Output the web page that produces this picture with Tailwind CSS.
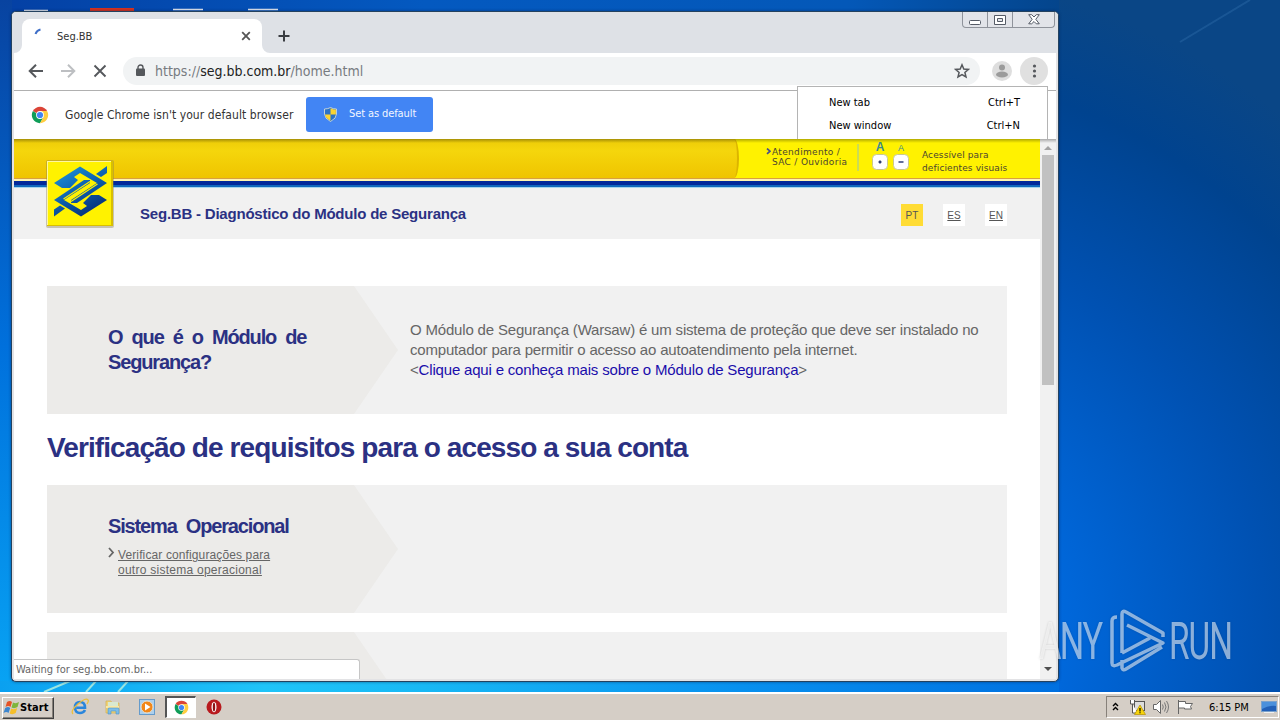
<!DOCTYPE html>
<html lang="pt-BR">

<head>
    <meta charset="UTF-8">
    <meta name="viewport" content="width=device-width, initial-scale=1.0">
    <title>Seg.BB</title>
    <script src="https://cdn.jsdelivr.net/npm/@tailwindcss/browser@4"></script>
</head>

<body class="w-[1280px] h-[720px] overflow-hidden relative flex flex-col justify-end bg-[#0053b8] font-['DejaVu_Sans_Condensed','DejaVu_Sans',sans-serif] text-[11px] text-black">

    <!-- Wallpaper -->
    <svg class="absolute inset-0" width="1280" height="692" viewBox="0 0 1280 692">
        <defs>
            <radialGradient id="sky" gradientUnits="userSpaceOnUse" cx="870" cy="630" r="660">
                <stop offset="0" stop-color="#0078ee" />
                <stop offset=".3" stop-color="#0067da" />
                <stop offset=".6" stop-color="#0051b2" />
                <stop offset=".85" stop-color="#00438f" />
                <stop offset="1" stop-color="#0a4686" />
            </radialGradient>
            <linearGradient id="left" x1="0" y1="0" x2="0" y2="1">
                <stop offset="0" stop-color="#0843a0" />
                <stop offset=".5" stop-color="#0070dc" />
                <stop offset="1" stop-color="#08a4f4" />
            </linearGradient>
            <linearGradient id="top" x1="0" y1="0" x2="1" y2="0">
                <stop offset="0" stop-color="#0440a4" />
                <stop offset=".4" stop-color="#0459c0" />
                <stop offset=".8" stop-color="#0458b8" />
                <stop offset="1" stop-color="#04458c" />
            </linearGradient>
            <linearGradient id="bottom" x1="0" y1="0" x2="1" y2="0">
                <stop offset="0" stop-color="#0aa0f0" />
                <stop offset=".25" stop-color="#20c4f8" />
                <stop offset=".4" stop-color="#18b8f4" />
                <stop offset=".7" stop-color="#0890ee" />
                <stop offset="1" stop-color="#0070e0" />
            </linearGradient>
        </defs>
        <rect width="1280" height="692" fill="url(#sky)" />
        <rect width="1059" height="12" fill="url(#top)" />
        <rect width="12" height="692" fill="url(#left)" />
        <rect y="681" width="1059" height="11" fill="url(#bottom)" />
        <path d="M44 692L70 681M86 692l10-11M118 692l10-11" stroke="#9ce4e0" stroke-width="2" />
        <path d="M1180 42L1250 0" stroke="#3f7fba" stroke-opacity=".3" stroke-width="2" />
        <path d="M24 10.500h24M173 9.500h30M248 9.500h30" stroke="#dfe6ef" stroke-width="1.500" />
        <path d="M90 9.500h44" stroke="#d8321f" stroke-width="3" />
    </svg>

    <!-- Browser window -->
    <main class="absolute left-[11px] top-[11px] w-[1048px] h-[671px] rounded-[5px] border border-[#24425f] bg-[#e3e3e5] px-0.5 pb-[2px] flex flex-col shadow-[0_0_3px_rgba(0,20,60,.5)]">

        <!-- Tab strip -->
        <div class="h-[41px] shrink-0 -mx-0.5 px-0.5 bg-[#dee1e6] rounded-t-[4px] flex items-end relative">
            <div class="ml-2 w-60 h-[34px] rounded-t-lg bg-white flex items-center relative">
                <svg class="absolute -left-2 bottom-0" width="8" height="8"><path d="M0 8A8 8 0 0 0 8 0V8z" fill="#fff" /></svg>
                <svg class="absolute -right-2 bottom-0" width="8" height="8"><path d="M8 8A8 8 0 0 1 0 0V8z" fill="#fff" /></svg>
                <svg class="ml-2 mb-1" width="16" height="16" viewBox="0 0 16 16"><path d="M5.500 8A7 7 0 0 1 10.500 3.500" fill="none" stroke="#3f6fc8" stroke-width="2" /></svg>
                <span class="ml-[11px] pt-0.5 text-[#333]">Seg.BB</span>
                <svg class="absolute left-[219px] top-[12px]" width="10" height="10" viewBox="0 0 10 10"><path d="M1.200 1.200l7.600 7.600M8.800 1.200L1.200 8.800" stroke="#555" stroke-width="1.800" /></svg>
            </div>
            <svg class="ml-4 mb-[11px]" width="12" height="12" viewBox="0 0 12 12"><path d="M6 .5v11M.5 6h11" stroke="#3a3d42" stroke-width="2" /></svg>
            <div class="absolute right-[3px] top-0 h-4 w-[93px] flex border border-t-0 border-[#8f939b] rounded-b-[4px] bg-[#e2e4e9]">
                <div class="w-[25px] border-r border-[#8f939b] flex justify-center items-center"><svg width="12" height="12" viewBox="0 0 12 12"><rect x=".5" y="6.500" width="11" height="4" rx="1" fill="#fff" stroke="#555b66" /></svg></div>
                <div class="w-[25px] border-r border-[#8f939b] flex justify-center items-center"><svg width="12" height="12" viewBox="0 0 12 12"><path fill-rule="evenodd" d="M.5 1.500h11v9H.5zM3.500 4.500v3h5v-3z" fill="#fff" stroke="#555b66" /></svg></div>
                <div class="flex-1 flex justify-center items-center"><svg width="12" height="11" viewBox="0 0 12 11"><path d="M.7.700h3L6 3 8.300.700h3L7.800 5.300l3.500 4.500h-3L6 7.500 3.700 9.800h-3L4.200 5.300z" fill="#fff" stroke="#555b66" /></svg></div>
            </div>
        </div>

        <!-- Toolbar -->
        <div class="h-[38px] shrink-0 bg-white border-b border-[#b0b0b0] flex items-center pl-[14px] pr-[8px] pb-px">
            <svg width="16" height="16" viewBox="0 0 16 16"><path d="M15 8H2M8 1.700L1.700 8 8 14.300" fill="none" stroke="#55585c" stroke-width="2" /></svg>
            <svg class="ml-4" width="16" height="16" viewBox="0 0 16 16"><path d="M1 8h13M8 1.700L14.300 8 8 14.300" fill="none" stroke="#bdbfc2" stroke-width="2" /></svg>
            <svg class="ml-4" width="16" height="16" viewBox="0 0 16 16"><path d="M2.500 2.500l11 11M13.500 2.500l-11 11" stroke="#55585c" stroke-width="1.900" /></svg>
            <div class="ml-[15px] w-[857px] h-7 rounded-full bg-[#f1f3f4] flex items-center relative">
                <svg class="ml-3" width="11" height="14" viewBox="0 0 11 14"><rect x="1" y="4.500" width="9" height="7.500" rx="1" fill="#55585c" /><path d="M3 5V3.500a2.500 2.500 0 0 1 5 0V5" fill="none" stroke="#55585c" stroke-width="1.400" /></svg>
                <span class="ml-[9px] text-[14px] text-[#777b80]">https://<span class="text-[#222]">seg.bb.com.br</span>/home.html</span>
                <svg class="absolute right-[10px]" width="16" height="16" viewBox="0 0 16 16"><path d="M8 1.800l1.800 4.200 4.600.4-3.500 3 1.100 4.500L8 11.500l-4 2.400 1.100-4.500-3.500-3 4.600-.4z" fill="none" stroke="#55585c" stroke-width="1.500" /></svg>
            </div>
            <svg class="ml-3" width="20" height="20" viewBox="0 0 20 20"><circle cx="10" cy="10" r="10" fill="#dedede" /><circle cx="10" cy="6.500" r="3" fill="#9b9b9b" /><ellipse cx="10" cy="13.500" rx="6" ry="3" fill="#9b9b9b" /></svg>
            <svg class="ml-2" width="28" height="28" viewBox="0 0 28 28"><circle cx="14" cy="14" r="14" fill="#e0e0e0" /><g fill="#55585c"><circle cx="14.500" cy="9" r="1.600" /><circle cx="14.500" cy="14" r="1.600" /><circle cx="14.500" cy="19" r="1.600" /></g></svg>
        </div>

        <!-- Default browser bar -->
        <div class="h-12 shrink-0 bg-white flex items-center pl-[17px] relative z-10">
            <svg width="18" height="18" viewBox="0 0 18 18">
                <path d="M9 9L1.900 4.900A8.200 8.200 0 0 1 16.100 4.900z" fill="#db4437" />
                <path d="M9 9h-1L1.900 4.900A8.200 8.200 0 0 0 9 17.200L12.500 11z" fill="#0f9d58" />
                <path d="M9 17.200A8.200 8.200 0 0 0 16.100 4.900H9L12.500 11z" fill="#ffcd40" />
                <circle cx="9" cy="9" r="3.900" fill="#fff" /><circle cx="9" cy="9" r="3.100" fill="#4285f4" />
            </svg>
            <span class="ml-4 w-[229px] text-[12px] text-[#333] whitespace-nowrap tracking-[.07px]">Google Chrome isn't your default browser</span>
            <div class="ml-3 -mt-px w-[127px] h-[35px] rounded-[3px] bg-[#4285f4] flex items-center pl-[18px] text-[#f2f6ff] whitespace-nowrap tracking-[-.1px]">
                <svg class="mr-3" width="13" height="15" viewBox="0 0 13 15"><path d="M6.500.5Q9 2 12.500 2v5q0 4.500-6 7.500Q.5 11.500.5 7V2Q4 2 6.500.500z" fill="#2a72c8" stroke="#e3e6d5" stroke-width=".8" /><path d="M6.500 1.200Q9 2.600 11.900 2.600V7.500H6.500zM6.500 7.500v6.300Q1.100 11 1.100 7.500z" fill="#fbd431" /></svg>
                Set as default
            </div>
        </div>

        <!-- Page -->
        <div class="flex-1 min-h-0 flex relative overflow-hidden">
            <div class="w-[1026px] bg-white overflow-hidden font-['Liberation_Sans',Arial,sans-serif]">
                <header class="relative">
                    <div class="h-10 bg-[#fff200] flex border-b border-[#d8a040]">
                        <!-- Gold strip with its rounded right end -->
                        <div class="w-[725px] h-full rounded-r-[5px_20px] border-r-2 border-[#dcb400] bg-linear-to-b from-[#eccb08] via-[#f5d60c] via-30% to-[#efc400]"></div>
                        <div class="flex-1 flex font-['DejaVu_Sans',sans-serif] text-[9px] text-[#4b4431]">
                            <svg class="ml-[27px] mt-[9px]" width="5" height="7" viewBox="0 0 5 7"><path d="M1 .5l3 2.700-3 2.700" fill="none" stroke="#4a5088" stroke-width="1.700" /></svg>
                            <div class="ml-px w-[85px] pt-[8px] leading-[10px] tracking-[.33px] whitespace-nowrap">Atendimento /<br>SAC / Ouvidoria</div>
                            <div class="w-0.5 h-[27px] mt-[5px] bg-[#cbdc55]"></div>
                            <div class="ml-[13px] flex gap-[5px] items-end h-[31px] font-['Liberation_Sans',sans-serif] text-[#3c8a90]">
                                <div class="w-4 flex flex-col items-center"><span class="text-[12px] leading-[12px] font-bold">A</span><svg width="16" height="17" viewBox="0 0 16 17"><rect x=".5" y="1.500" width="15" height="15" rx="4" fill="#fff" stroke="#c9c890" /><path d="M8 7.500v3M6.500 9h3" stroke="#26366c" stroke-width="1.600" /></svg></div>
                                <div class="w-4 flex flex-col items-center"><span class="text-[9px] leading-[9px]">A</span><svg width="16" height="17" viewBox="0 0 16 17"><rect x=".5" y="1.500" width="15" height="15" rx="4" fill="#fff" stroke="#c9c890" /><path d="M5.500 9h5" stroke="#3a4a80" stroke-width="1.600" /></svg></div>
                            </div>
                            <div class="ml-[13px] pt-[10px] leading-[13px] tracking-[.12px] whitespace-nowrap">Acessível para<br>deficientes visuais</div>
                        </div>
                    </div>
                    <div class="h-0.5 bg-[#fff3b0]"></div>
                    <div class="h-1 bg-[#03299a]"></div>
                    <div class="h-0.5 bg-[#1168bd]"></div>
                    <div class="h-px bg-[#a8d4ec]"></div>
                    <div class="h-[51px] bg-[#f1f1f1] flex items-center pl-[126px] pr-[33px] text-[10px] text-[#555]">
                        <h1 class="text-[15px] pt-0.5 font-bold text-[#2b3183] tracking-[-.21px] flex-1">Seg.BB - Diagnóstico do Módulo de Segurança</h1>
                        <span class="w-[22px] h-[22px] bg-[#ffdc35] flex items-center justify-center mt-[3px]">PT</span>
                        <a href="#" class="ml-5 w-[22px] h-[22px] bg-white flex items-center justify-center underline mt-[3px]">ES</a>
                        <a href="#" class="ml-5 w-[22px] h-[22px] bg-white flex items-center justify-center underline mt-[3px]">EN</a>
                    </div>
                    <!-- Logo -->
                    <svg class="absolute left-[31px] top-[20px]" width="70" height="70" viewBox="0 0 70 70">
                        <defs>
                            <linearGradient id="bb" gradientUnits="userSpaceOnUse" x1="20" y1="8" x2="50" y2="58"><stop offset="0" stop-color="#1b8fd6" /><stop offset=".5" stop-color="#0c5cab" /><stop offset="1" stop-color="#062a72" /></linearGradient>
                        </defs>
                        <rect x="1" y="1" width="68" height="68" rx="2" fill="#8a8050" opacity=".4" />
                        <rect x="2" y="2" width="66" height="65" fill="#d9bf00" />
                        <rect x="2" y="2" width="64" height="64" fill="#fff7a0" />
                        <rect x="3" y="3" width="63" height="63" fill="#fff200" />
                        <g fill="url(#bb)">
                            <path d="M9 24L35 7.500 62 24 32 44H26V41L52 24 35 14 29 18 33 21 25 29H17z" />
                            <path d="M62 41L36 57.500 9 41 39 21H45V24L19 41 36 51 42 47 38 44 46 36H54z" />
                            <path d="M62 7v7l-6 4-5-3zM9 57.500v-7l6-4 5 3z" />
                        </g>
                        <path d="M26 42.500L52.500 25M45 22.500L18.500 40" stroke="#fff200" stroke-width="1.200" />
                    </svg>
                </header>

                <section class="mt-[47px] ml-[33px] w-[960px] h-32 bg-[#f1f1f1] flex relative">
                    <svg class="absolute left-0 top-0" width="351" height="128"><path d="M0 0h307l44 64-44 64H0z" fill="#ecebe9" /></svg>
                    <h2 class="relative ml-[61px] w-[302px] pt-[39px] text-[20px] leading-[25px] font-bold text-[#2b3183] tracking-[-1.15px] [word-spacing:4.7px]">O que é o Módulo de<br>Segurança?</h2>
                    <p class="pt-[34px] text-[15px] leading-5 text-[#666] tracking-[-.18px] whitespace-nowrap">O Módulo de Segurança (Warsaw) é um sistema de proteção que deve ser instalado no<br>computador para permitir o acesso ao autoatendimento pela internet.<br>&lt;<a href="#" class="text-[#1a0dab]">Clique aqui e conheça mais sobre o Módulo de Segurança</a>&gt;</p>
                </section>

                <h2 class="ml-[33px] h-[71px] flex items-center text-[28px] font-bold text-[#2b3183] tracking-[-.9px] pb-1">Verificação de requisitos para o acesso a sua conta</h2>

                <section class="ml-[33px] w-[960px] h-32 bg-[#f1f1f1] relative">
                    <svg class="absolute left-0 top-0" width="351" height="128"><path d="M0 0h307l44 64-44 64H0z" fill="#ecebe9" /></svg>
                    <div class="relative pl-[61px] pt-[29px]">
                        <h2 class="text-[20px] leading-[25px] font-bold text-[#2b3183] tracking-[-1.15px] [word-spacing:4.7px]">Sistema Operacional</h2>
                        <div class="flex mt-[9px] text-[12px] leading-[15px] text-[#666]">
                            <svg class="mr-[3px] -mt-px" width="7" height="11" viewBox="0 0 7 11"><path d="M1 1l4 4.500L1 10" fill="none" stroke="#666" stroke-width="1.800" /></svg>
                            <a href="#" class="underline tracking-[.12px]">Verificar configurações para<br><span class="tracking-[.26px]">outro sistema operacional</span></a>
                        </div>
                    </div>
                </section>

                <section class="mt-[19px] ml-[33px] w-[960px] h-32 bg-[#f1f1f1]">
                    <svg width="351" height="128"><path d="M0 0h307l44 64-44 64H0z" fill="#ecebe9" /></svg>
                </section>
            </div>

            <!-- Scrollbar -->
            <div class="w-4 bg-[#f1f1f1] flex flex-col items-center">
                <svg class="mt-[7px]" width="8" height="4"><path d="M0 4l4-4 4 4z" fill="#a3a3a3" /></svg>
                <div class="mt-[5px] w-[12px] h-[230px] bg-[#c1c1c1]"></div>
                <svg class="mt-auto mb-[8px]" width="8" height="4"><path d="M0 0l4 4 4-4z" fill="#505050" /></svg>
            </div>

            <div class="absolute inset-x-0 top-0 h-1 bg-linear-to-b from-black/30 to-transparent"></div>

            <!-- Status bubble -->
            <div class="absolute left-0 bottom-0 w-[346px] h-5 bg-white border-t border-r border-[#c6c6c6] rounded-tr-[3px] pl-0.5 leading-[19px] text-[#666]">Waiting for seg.bb.com.br...</div>
        </div>

        <!-- Chrome menu -->
        <div class="absolute z-20 left-[785px] top-[74px] w-[251px] h-[53px] bg-white border border-b-0 border-[#b4b4b4] pt-[5px] pl-[31px] pr-[27px]">
            <div class="h-[23px] flex items-center justify-between"><span>New tab</span><span>Ctrl+T</span></div>
            <div class="h-[23px] flex items-center justify-between"><span>New window</span><span>Ctrl+N</span></div>
        </div>
    </main>

    <!-- Watermark -->
    <svg class="absolute left-[1036px] top-[606px] overflow-visible drop-shadow-[0_0_1px_rgba(0,0,0,.25)]" width="230" height="70" viewBox="0 0 230 70">
        <g fill="#fff" fill-opacity=".55" font-family="Roboto, sans-serif">
            <g transform="translate(3 53) scale(.66 1)" font-size="52"><text textLength="97" lengthAdjust="spacing">ANY</text></g>
            <g transform="translate(133 53) scale(.64 1)" font-size="52"><text textLength="100" lengthAdjust="spacing">RUN</text></g>
        </g>
        <path d="M81 11q-5 0-5 4v42q0 4 5 2l46-22-36-18M86 47V8q0-4 4-2l37 21v4M86 47l28-15M86 54v8q1 3 4 1l36-22" fill="none" stroke="#fff" stroke-opacity=".55" stroke-width="3.500" stroke-linejoin="round" />
    </svg>

    <!-- Taskbar -->
    <footer class="relative h-[28px] bg-[#d5cec6] border-t-2 border-white flex items-center">
        <div class="ml-0.5 w-[52px] h-[22px] mt-0.5 border border-white border-r-[#404040] border-b-[#404040] shadow-[inset_-1px_-1px_0_#87817a] flex items-center font-bold">
            <svg width="17" height="16" viewBox="0 0 17 16"><path d="M4 2q3-2 5 0L7.500 7q-2-2-5 0z" fill="#e65326" /><path d="M10 2.500q3 1.500 6-.5L14.500 7q-3 2-6 .5z" fill="#7fb53c" /><path d="M2.200 8q3-2 5 0L5.500 13q-2-2-5 0z" fill="#3d86cf" /><path d="M8.200 8.500q3 1.500 6-.5l-1.500 5q-3 2-6 .5z" fill="#f6bf29" /></svg>
            <span class="tracking-[.1px]">Start</span>
        </div>
        <!-- Internet Explorer -->
        <svg class="ml-[17px]" width="18" height="18" viewBox="0 0 18 18"><path d="M14 12q-1.500 3-5 3-5 0-5-5.500T9 4q5 0 5 5.700H5.500" fill="none" stroke="#2a86dc" stroke-width="2.600" /><path d="M2 16Q-1 13 7 6t10-4q1 1-1 4" fill="none" stroke="#eebf3a" stroke-width="1.300" /></svg>
        <!-- Explorer -->
        <svg class="ml-[15px]" width="18" height="18" viewBox="0 0 18 18"><path d="M2 3h5l1 2h7v10H2z" fill="#f0d375" stroke="#d2b050" stroke-width=".7" /><path d="M4 4h10v4H4z" fill="#d9e9cf" /><path d="M2 8h13v2H2z" fill="#f9e8a4" /><path d="M4 16v-5q0-1 1-1h9q1 0 1 1v5h-3v-3H7v3z" fill="#7dbde8" stroke="#4b94c8" stroke-width=".6" /></svg>
        <!-- Media player -->
        <svg class="ml-[17px]" width="16" height="16" viewBox="0 0 16 16"><rect x=".5" y=".5" width="15" height="15" fill="#acd0ed" stroke="#659bcb" /><circle cx="8" cy="8" r="6" fill="#f28718" stroke="#e8e0d0" /><path d="M6 4.500l5.500 3.500L6 11.500z" fill="#fff" /></svg>
        <div class="ml-[10px] w-[31px] h-[22px] bg-white border-2 border-r border-b border-[#555] border-r-white border-b-white flex items-center justify-center">
            <svg width="15" height="15" viewBox="0 0 18 18">
                <path d="M9 9L1.900 4.900A8.200 8.200 0 0 1 16.100 4.900z" fill="#db4437" />
                <path d="M9 9h-1L1.900 4.900A8.200 8.200 0 0 0 9 17.200L12.500 11z" fill="#0f9d58" />
                <path d="M9 17.200A8.200 8.200 0 0 0 16.100 4.900H9L12.500 11z" fill="#ffcd40" />
                <circle cx="9" cy="9" r="3.900" fill="#fff" /><circle cx="9" cy="9" r="3.100" fill="#4285f4" />
            </svg>
        </div>
        <!-- Opera -->
        <svg class="ml-[10px]" width="16" height="16" viewBox="0 0 16 16"><circle cx="8" cy="8" r="7.500" fill="#b81a1e" /><ellipse cx="8" cy="8" rx="2.500" ry="5.300" fill="#fff" /><ellipse cx="8" cy="8" rx="1.200" ry="4.600" fill="#8e1216" /></svg>

        <!-- Tray -->
        <div class="ml-auto mr-px h-[22px] w-[173px] border border-[#87817a] border-r-white border-b-white flex items-center pl-[5px]">
            <svg width="7" height="10" viewBox="0 0 7 10"><path d="M1 4l2.500-2.500L6 4M1 8l2.500-2.500L6 8" fill="none" stroke="#000" stroke-width="1.400" /></svg>
            <svg class="ml-[10px]" width="17" height="16" viewBox="0 0 17 16"><rect x="5.500" y="2.500" width="10" height="9" fill="#ddd" stroke="#555" /><path d="M1.500 1v4h4V1M3.500 5v9h5" fill="#fff" stroke="#555" /><path d="M11 6l5.500 9.500h-11z" fill="#f7d40a" stroke="#b69000" stroke-width=".7" /><path d="M11 9v3.500M11 13.300v1" stroke="#000" stroke-width="1.200" /></svg>
            <svg class="ml-[7px]" width="17" height="16" viewBox="0 0 17 16"><path d="M.5 5.500h3l4-4v13l-4-4h-3z" fill="#fff" stroke="#666" /><path d="M9.500 5.500q1.500 2.500 0 5M11.500 3.500q3 4.500 0 9M13.500 2q4 6 0 12" fill="none" stroke="#777" /></svg>
            <svg class="ml-[7px]" width="17" height="16" viewBox="0 0 17 16"><path d="M1.500 1v14M1.500 2.500h7v2h7l-2 3 1 2.500h-7v-1h-6" fill="#fff" stroke="#666" /></svg>
            <span class="ml-[15px] pt-0.5 whitespace-nowrap">6:15 PM</span>
            <svg class="ml-[12px] shrink-0" width="16" height="14" viewBox="0 0 16 14"><rect x=".5" y="1.500" width="15" height="10" fill="#2160b8" stroke="#7ba2cc" /><path d="M1 2h14v4Q8 5 1 9z" fill="#4a90dc" /><path d="M3 12.500h10" stroke="#f0f0f0" /></svg>
        </div>
    </footer>
</body>

</html>
